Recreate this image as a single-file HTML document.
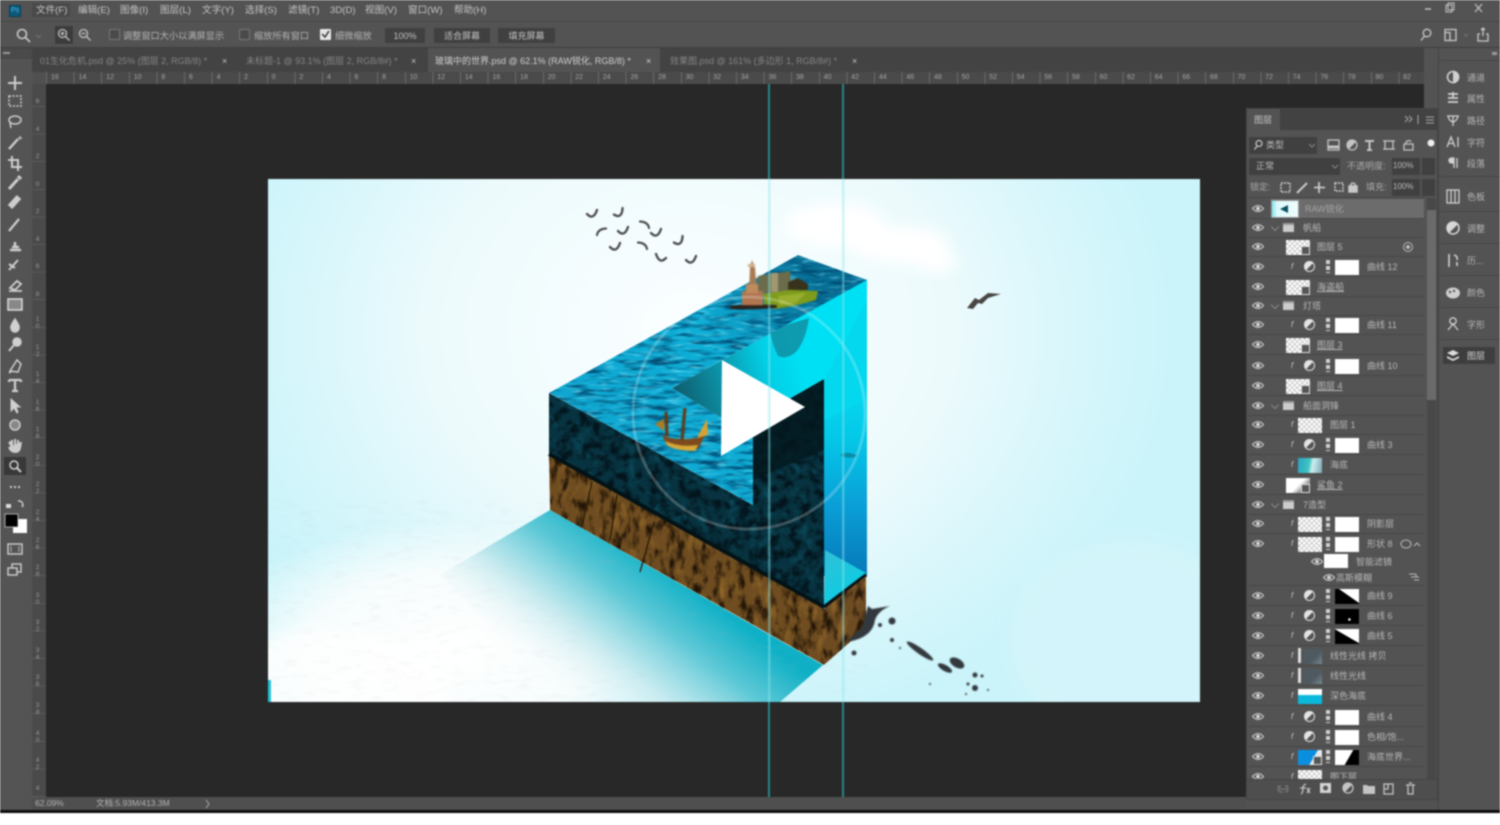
<!DOCTYPE html>
<html><head><meta charset="utf-8"><title>Photoshop</title>
<style>
html,body{margin:0;padding:0;background:#fff}
body{width:1500px;height:825px;overflow:hidden;position:relative;font-family:"Liberation Sans","Noto Sans CJK SC",sans-serif}
#app{position:absolute;left:0;top:0;width:1500px;height:813px;background:#535353;overflow:hidden;filter:blur(.8px)}
.a{position:absolute}
.t{position:absolute;white-space:nowrap;color:#bdbdbd;font-size:9.5px;line-height:14px}
.m{top:4px;color:#c4c4c4;font-size:9.6px}
.o{top:29px;color:#b4b4b4;font-size:9.2px}
.b{position:absolute;top:28px;height:15px;background:#404040;color:#c0c0c0;font-size:9px;line-height:16px;text-align:center}
.cb{position:absolute;top:29px;width:9px;height:9px;border:1px solid #777;background:#4a4a4a;border-radius:1px}
.tb{top:54px;color:#858585;font-size:9px}
.rul{position:absolute;left:46px;top:72px;width:1378px;height:12px;overflow:hidden;white-space:nowrap;background:#4a4a4a repeating-linear-gradient(90deg,#6a6a6a 0 1px,transparent 1px 27.6px);font-size:7px;line-height:12px;color:#a4a4a4}
.rul span{display:inline-block;width:27.6px;text-indent:5px}
.vr{position:absolute;left:33px;width:9px;font-size:6.5px;line-height:7px;color:#999;text-align:center}
.d{right:auto;position:absolute;color:#bcbcbc;font-size:9px;line-height:14px;white-space:nowrap}
.r{position:absolute;left:1248px;width:176px;height:20px;border-bottom:1px solid #474747;box-sizing:border-box}
.r>*{position:absolute}
.r .l{color:#b8b8b8;font-size:9px;line-height:19px;top:1px;white-space:nowrap}
.e{left:4px;top:5px;width:12px;height:9px}
.fx{left:43px;top:0;color:#c4c4c4;font-size:8px;line-height:19px;font-style:italic}
.c{left:56px;top:4px;width:11px;height:11px;border-radius:50%;background:linear-gradient(135deg,#e4e4e4 50%,#555 50%);box-shadow:0 0 0 1px #ddd inset}
.ln{left:78px;top:3px;width:4px;height:13px;background:repeating-linear-gradient(#d0d0d0 0 4px,#555 4px 6px)}
.k{left:87px;top:3px;width:24px;height:15px;background:#fff}
.chk{background:repeating-conic-gradient(#cfcfcf 0 25%,#fff 0 50%) 0 0/5px 5px;height:15px;top:3px}
.sm{left:38px;width:24px}
.sm::after{content:"";position:absolute;right:0;bottom:0;width:9px;height:9px;background:#555;border:1px solid #ddd;box-sizing:border-box}
.cl{left:50px;width:24px}
.fo{left:35px;top:5px;width:11px;height:9px;background:#ccc;border-top:2px solid #999;box-sizing:border-box}
.ar{left:24px;top:6px;width:5px;height:5px;border:solid #888;border-width:0 1px 1px 0;transform:rotate(45deg)}
.dk{position:absolute;left:1438px;width:62px;height:20px}
.dk .l{position:absolute;left:29px;top:4px;color:#b6b6b6;font-size:9px;line-height:14px}
.dk svg{position:absolute;left:7px;top:2px;width:16px;height:16px}
.sep{position:absolute;left:1438px;width:62px;height:1px;background:#454545}
</style></head>
<body>
<div id="app">
<!-- top bar -->
<div class="a" style="left:0;top:21px;width:1500px;height:1px;background:#484848"></div>
<div class="a" style="left:9px;top:5px;width:12px;height:12px;background:#0c5a7a;border:1px solid #06415a;box-sizing:border-box"></div>
<div class="t" style="left:11px;top:4px;font-size:7px;color:#52b8e6">Ps</div>
<div class="a" style="left:32px;top:3px;width:38px;height:14px;background:#4a4a4a"></div>
<span class="t m" style="left:36px">文件(F)</span><span class="t m" style="left:78px">编辑(E)</span><span class="t m" style="left:120px">图像(I)</span><span class="t m" style="left:160px">图层(L)</span><span class="t m" style="left:202px">文字(Y)</span><span class="t m" style="left:245px">选择(S)</span><span class="t m" style="left:288px">滤镜(T)</span><span class="t m" style="left:330px">3D(D)</span><span class="t m" style="left:365px">视图(V)</span><span class="t m" style="left:408px">窗口(W)</span><span class="t m" style="left:454px">帮助(H)</span>
<svg class="a" style="left:1420px;top:0" width="70" height="20" fill="none" stroke="#c4c4c4"><path d="M5 9h6" stroke-width="1.5"/><rect x="26" y="5" width="6" height="7"/><rect x="28" y="3" width="6" height="7"/><path d="M55 4l7 8M62 4l-7 8" stroke-width="1.2"/></svg>

<!-- options bar -->
<div class="a" style="left:0;top:47px;width:1500px;height:1px;background:#3e3e3e"></div>
<svg class="a" style="left:14px;top:25px" width="100" height="20" fill="none" stroke="#c8c8c8" stroke-width="1.6"><circle cx="8" cy="9" r="4.5"/><path d="M11.500 12.500l4.500 4.500"/><path d="M22 10l2.500 2.500L27 10" stroke="#777" stroke-width="1"/></svg>
<div class="a" style="left:55px;top:26px;width:18px;height:18px;background:#3c3c3c"></div>
<svg class="a" style="left:56px;top:27px" width="40" height="16" fill="none" stroke="#c0c0c0" stroke-width="1.3"><circle cx="6.500" cy="6.500" r="4"/><path d="M9.500 9.500l4 4M4.500 6.500h4M6.500 4.500v4"/><circle cx="27.500" cy="6.500" r="4"/><path d="M30.500 9.500l4 4M25.500 6.500h4"/></svg>
<div class="cb" style="left:109px"></div><span class="t o" style="left:123px">调整窗口大小以满屏显示</span>
<div class="cb" style="left:239px"></div><span class="t o" style="left:254px">缩放所有窗口</span>
<div class="cb" style="left:320px;background:#e4e4e4;border-color:#eee"></div>
<svg class="a" style="left:320px;top:29px" width="11" height="11" fill="none" stroke="#333" stroke-width="1.5"><path d="M2 5l3 3 4-6"/></svg>
<span class="t o" style="left:335px">细微缩放</span>
<div class="b" style="left:385px;width:40px">100%</div>
<div class="b" style="left:434px;width:56px">适合屏幕</div>
<div class="b" style="left:498px;width:57px">填充屏幕</div>
<svg class="a" style="left:1416px;top:25px" width="84" height="20" fill="none" stroke="#c8c8c8" stroke-width="1.3"><circle cx="11" cy="8" r="3.800"/><path d="M8.500 11L5 15.500"/><rect x="29" y="4.500" width="11" height="11"/><path d="M29 7.500h5v8" /><path d="M48 9l2 2 2-2" stroke="#777" stroke-width="1"/><path d="M64 9h-2v7h10V9h-2M67 11V3M65 5l2-2 2 2"/></svg>

<!-- tabs -->
<div class="a" style="left:32px;top:48px;width:1392px;height:24px;background:#434343"></div>
<div class="a" style="left:0;top:48px;width:32px;height:11px;background:#4a4a4a"></div>
<div class="a" style="left:3px;top:52px;width:7px;height:2px;background:#999"></div>
<div class="a" style="left:428px;top:48px;width:232px;height:24px;background:#535353"></div>
<span class="t tb" style="left:40px">01生化危机.psd @ 25% (图层 2, RGB/8) *</span>
<span class="t tb" style="left:222px;color:#c8c8c8">×</span>
<span class="t tb" style="left:246px">未标题-1 @ 93.1% (图层 2, RGB/8#) *</span>
<span class="t tb" style="left:411px;color:#c8c8c8">×</span>
<span class="t tb" style="left:435px;color:#d0d0d0">玻璃中的世界.psd @ 62.1% (RAW锐化, RGB/8) *</span>
<span class="t tb" style="left:646px;color:#d8d8d8">×</span>
<span class="t tb" style="left:670px">效果图.psd @ 161% (多边形 1, RGB/8#) *</span>
<span class="t tb" style="left:852px;color:#c8c8c8">×</span>

<!-- rulers -->
<div class="a" style="left:32px;top:72px;width:14px;height:12px;background:#505050"></div>
<div class="rul"><span>16</span><span>14</span><span>12</span><span>10</span><span>8</span><span>6</span><span>4</span><span>2</span><span>0</span><span>2</span><span>4</span><span>6</span><span>8</span><span>10</span><span>12</span><span>14</span><span>16</span><span>18</span><span>20</span><span>22</span><span>24</span><span>26</span><span>28</span><span>30</span><span>32</span><span>34</span><span>36</span><span>38</span><span>40</span><span>42</span><span>44</span><span>46</span><span>48</span><span>50</span><span>52</span><span>54</span><span>56</span><span>58</span><span>60</span><span>62</span><span>64</span><span>66</span><span>68</span><span>70</span><span>72</span><span>74</span><span>76</span><span>78</span><span>80</span><span>82</span></div>
<div class="a" style="left:32px;top:84px;width:14px;height:713px;background:#4a4a4a repeating-linear-gradient(0deg,#5a5a5a 0 1px,transparent 1px 27.6px)"></div>
<div class="vr" style="top:98px">6</div><div class="vr" style="top:126px">4</div><div class="vr" style="top:153px">2</div><div class="vr" style="top:181px">0</div><div class="vr" style="top:208px">2</div><div class="vr" style="top:236px">4</div><div class="vr" style="top:263px">6</div><div class="vr" style="top:291px">8</div><div class="vr" style="top:316px">1<br>0</div><div class="vr" style="top:344px">1<br>2</div><div class="vr" style="top:371px">1<br>4</div><div class="vr" style="top:399px">1<br>6</div><div class="vr" style="top:426px">1<br>8</div><div class="vr" style="top:454px">2<br>0</div><div class="vr" style="top:481px">2<br>2</div><div class="vr" style="top:509px">2<br>4</div><div class="vr" style="top:537px">2<br>6</div><div class="vr" style="top:564px">2<br>8</div><div class="vr" style="top:592px">3<br>0</div><div class="vr" style="top:619px">3<br>2</div><div class="vr" style="top:647px">3<br>4</div><div class="vr" style="top:674px">3<br>6</div><div class="vr" style="top:702px">3<br>8</div><div class="vr" style="top:730px">4<br>0</div><div class="vr" style="top:757px">4<br>2</div><div class="vr" style="top:785px">4</div>

<!-- canvas -->
<div class="a" style="left:46px;top:84px;width:1378px;height:713px;background:#282828"></div>

<!-- artwork -->
<svg class="a" style="left:0;top:0" width="1500" height="813" viewBox="0 0 1500 813">
<defs>
<clipPath id="ic"><rect x="268" y="179" width="932" height="523"/></clipPath>
<radialGradient id="bgw" gradientUnits="userSpaceOnUse" cx="690" cy="330" r="400" gradientTransform="matrix(1.2 0 0 1 -138 0)"><stop offset="0" stop-color="#fbfeff"/><stop offset=".55" stop-color="#ecfafc"/><stop offset="1" stop-color="#e4f8fb" stop-opacity="0"/></radialGradient>
<radialGradient id="bl"><stop offset="0" stop-color="#fff"/><stop offset=".6" stop-color="#fbfdfd" stop-opacity=".9"/><stop offset="1" stop-color="#fff" stop-opacity="0"/></radialGradient>
<linearGradient id="sh" gradientUnits="userSpaceOnUse" x1="690" y1="585" x2="590" y2="715"><stop offset="0" stop-color="#0fb0c6"/><stop offset=".3" stop-color="#5cc8d6"/><stop offset=".65" stop-color="#c6eaef" stop-opacity=".85"/><stop offset="1" stop-color="#f4fafb" stop-opacity="0"/></linearGradient>
<linearGradient id="sea" gradientUnits="userSpaceOnUse" x1="560" y1="420" x2="800" y2="260"><stop offset="0" stop-color="#0fa6d0"/><stop offset=".6" stop-color="#0eaed6"/><stop offset="1" stop-color="#076f96"/></linearGradient>
<linearGradient id="wall" gradientUnits="userSpaceOnUse" x1="672" y1="400" x2="800" y2="360"><stop offset="0" stop-color="#0e5666"/><stop offset=".4" stop-color="#0c93a8"/><stop offset=".75" stop-color="#02cfe6"/><stop offset="1" stop-color="#00e0f4"/></linearGradient>
<linearGradient id="side" x1="0" y1="0" x2="0" y2="1"><stop offset="0" stop-color="#05dcf2"/><stop offset=".3" stop-color="#04c8e8"/><stop offset=".65" stop-color="#0a9ed6"/><stop offset="1" stop-color="#0678b8"/></linearGradient>
<linearGradient id="fl" gradientUnits="userSpaceOnUse" x1="826" y1="555" x2="866" y2="600"><stop offset="0" stop-color="#30c0d8"/><stop offset="1" stop-color="#00d0e6"/></linearGradient>
<filter id="fSea" filterUnits="userSpaceOnUse" x="540" y="250" width="340" height="270" color-interpolation-filters="sRGB">
 <feTurbulence type="fractalNoise" baseFrequency=".04 .2" numOctaves="3" seed="7" result="n"/>
 <feColorMatrix in="n" values="0 0 0 0 .0 0 0 0 0 .3 0 0 0 0 .46 3 0 0 0 -1.35" result="d"/>
 <feTurbulence type="fractalNoise" baseFrequency=".06 .3" numOctaves="2" seed="21" result="n2"/>
 <feColorMatrix in="n2" values="0 0 0 0 .4 0 0 0 0 .85 0 0 0 0 .95 2.4 0 0 0 -1.3" result="w"/>
 <feMerge result="m"><feMergeNode in="SourceGraphic"/><feMergeNode in="d"/><feMergeNode in="w"/></feMerge>
 <feComposite in="m" in2="SourceGraphic" operator="in"/>
</filter>
<filter id="fRock" filterUnits="userSpaceOnUse" x="540" y="380" width="300" height="240" color-interpolation-filters="sRGB">
 <feTurbulence type="fractalNoise" baseFrequency=".1" numOctaves="4" seed="5" result="n"/>
 <feColorMatrix in="n" values="0 0 0 0 .01 0 0 0 0 .08 0 0 0 0 .11 3.4 0 0 0 -1.4" result="d"/>
 <feTurbulence type="fractalNoise" baseFrequency=".08" numOctaves="3" seed="33" result="n2"/>
 <feColorMatrix in="n2" values="0 0 0 0 .04 0 0 0 0 .3 0 0 0 0 .37 3 0 0 0 -1.65" result="w"/>
 <feMerge result="m"><feMergeNode in="SourceGraphic"/><feMergeNode in="d"/><feMergeNode in="w"/></feMerge>
 <feComposite in="m" in2="SourceGraphic" operator="in"/>
</filter>
<filter id="fSoil" filterUnits="userSpaceOnUse" x="540" y="450" width="340" height="230" color-interpolation-filters="sRGB">
 <feTurbulence type="fractalNoise" baseFrequency=".13 .06" numOctaves="4" seed="11" result="n"/>
 <feColorMatrix in="n" values="0 0 0 0 .12 0 0 0 0 .07 0 0 0 0 .02 3 0 0 0 -1.35" result="d"/>
 <feTurbulence type="fractalNoise" baseFrequency=".08 .04" numOctaves="3" seed="42" result="n2"/>
 <feColorMatrix in="n2" values="0 0 0 0 .64 0 0 0 0 .46 0 0 0 0 .18 2.2 0 0 0 -1.2" result="w"/>
 <feMerge result="m"><feMergeNode in="SourceGraphic"/><feMergeNode in="d"/><feMergeNode in="w"/></feMerge>
 <feComposite in="m" in2="SourceGraphic" operator="in"/>
</filter>
<filter id="fPaper" filterUnits="userSpaceOnUse" x="268" y="500" width="600" height="202">
 <feTurbulence type="fractalNoise" baseFrequency=".06 .2" numOctaves="3" seed="9"/>
 <feColorMatrix values="0 0 0 0 .45 0 0 0 0 .5 0 0 0 0 .52 2.2 0 0 0 -1.2"/>
</filter>
<filter id="b6"><feGaussianBlur stdDeviation="7"/></filter>
<filter id="b1"><feGaussianBlur stdDeviation=".5"/></filter>
<path id="bA" d="M-5 3Q-4-3 4-3.500" fill="none" stroke="#505052" stroke-width="2.2" stroke-linecap="round"/>
<path id="bB" d="M-6-1Q-3 2-1 1.500Q2 1 4-5" fill="none" stroke="#505052" stroke-width="2.4" stroke-linecap="round"/>
</defs>
<g clip-path="url(#ic)">
 <rect x="268" y="179" width="932" height="523" fill="#cbf4fa"/>
 <rect x="268" y="179" width="932" height="523" fill="url(#bgw)"/>
 <ellipse cx="1130" cy="640" rx="120" ry="100" fill="#d6f5fa" opacity=".7" filter="url(#b6)"/>
 <ellipse cx="450" cy="650" rx="240" ry="130" fill="url(#bl)"/>
 <ellipse cx="330" cy="690" rx="120" ry="60" fill="#fff" opacity=".8" filter="url(#b6)"/>
 <g filter="url(#b6)" fill="#fff"><ellipse cx="835" cy="225" rx="50" ry="22"/><ellipse cx="900" cy="245" rx="50" ry="18"/><ellipse cx="935" cy="262" rx="22" ry="10"/></g>
 <polygon points="550,510 823,665 780,702 560,702 440,575" fill="url(#sh)"/>
 <rect x="268" y="500" width="600" height="202" filter="url(#fPaper)" opacity=".14"/>
 <rect x="268" y="680" width="3" height="22" fill="#20c4d8"/>

 <!-- wall / cyan -->
 <polygon points="672,388 737,352 867,279 867,430 824,379 753,420 753,437" fill="url(#wall)"/>
 <!-- iceberg -->
 <path d="M770 330L809 318Q806 340 796 352Q786 360 778 356Q772 344 770 330Z" fill="#128a9e" opacity=".8"/>
 <!-- right side -->
 <rect x="824" y="378" width="43" height="198" fill="url(#side)"/>
 <polygon points="824,379 867,300 867,400 824,420" fill="#04d8ee"/>
 <polygon points="825,550 866,573 824,608" fill="url(#fl)"/>
 <!-- rock -->
 <polygon points="549,393 753,505 753,420 824,379 824,610 549,458" fill="#07323f" filter="url(#fRock)"/>
 <path d="M753 420L824 379V450L753 480Z" fill="#04181e" opacity=".8"/>
 <path d="M549 454L824 607" stroke="#041216" stroke-width="4" fill="none"/>
 <path d="M824 607L866 575" stroke="#041216" stroke-width="3.500" fill="none"/>
 <!-- soil -->
 <polygon points="549,456 824,609 824,665 550,510" fill="#6f4d20" filter="url(#fSoil)"/>
 <polygon points="824,609 866,576 866,628 824,665" fill="#6e4c22" filter="url(#fSoil)"/>
 <path d="M592 482L582 526M617 495L610 540M654 522L640 572" stroke="#2a1a08" stroke-width="1.3" fill="none"/>
 <!-- ocean -->
 <polygon points="549,393 753,505 753,437 672,388 737,352 867,280 798,255" fill="url(#sea)" filter="url(#fSea)"/>
 <!-- island -->
 <g filter="url(#b1)">
  <path d="M758 276L790 271L792 293L757 293Z" fill="#6a6c4c"/>
  <rect x="771" y="273" width="7" height="19" fill="#a09870"/>
  <path d="M788 282L798 278L808 284L808 290L788 292Z" fill="#37331f"/>
  <path d="M763 294L790 290L818 291L816 300L794 306L775 309L765 305Z" fill="#7f9c1e"/>
  <path d="M778 296L806 293L796 303L780 305Z" fill="#98ae2e"/>
  <path d="M730 306Q752 303 777 305L777 308Q752 310 730 309Z" fill="#2c221a"/>
  <path d="M750 268L752 260L755 268L757 292H749Z" fill="#a87a52"/>
  <rect x="748" y="264" width="7" height="3" fill="#d0b090"/>
  <rect x="742" y="291" width="21" height="14" fill="#b07650"/>
  <rect x="746" y="284" width="12" height="9" fill="#c08a5c"/>
 </g>
 <!-- ship -->
 <g filter="url(#b1)">
  <path d="M662 435Q680 443 705 436L698 449Q676 450 666 444Z" fill="#7e4a1a"/>
  <path d="M665 441Q680 448 698 445L695 451Q678 451 668 446Z" fill="#d8a838"/>
  <path d="M666 412L667 436M685 408L682 440" stroke="#5e3a14" stroke-width="3.200"/>
  <path d="M697 438L707 419L708 435Z" fill="#d8a230"/>
  <path d="M655 424L664 419L664 431Z" fill="#b07a20"/>
 </g>
 <!-- fish -->
 <path d="M840 455Q848 450 858 456Q848 460 840 455Z" fill="#0a7890" opacity=".7"/>
 <!-- ring -->
 <circle cx="749" cy="413" r="116" fill="none" stroke="#fff" stroke-opacity=".22" stroke-width="3"/>
 <!-- play -->
 <polygon points="722,360 805,407 721,456" fill="#fff"/>
 <!-- birds -->
 <use href="#bB" x="593" y="215"/><use href="#bB" transform="translate(620,214) rotate(-15)"/><use href="#bA" x="602" y="232"/><use href="#bB" x="624" y="232"/><use href="#bA" transform="translate(644,225) scale(-1,1)"/><use href="#bB" x="657" y="234"/><use href="#bB" transform="translate(680,242) rotate(-15)"/><use href="#bB" x="616" y="248"/><use href="#bA" transform="translate(642,246) scale(-1,1)"/><use href="#bB" transform="translate(660,259) scale(-1,1)"/><use href="#bB" x="692" y="261"/>
 <path d="M967 308L975 298L979 300L988 293L1001 294L988 298L982 304L978 303L973 309Z" fill="#4a4545"/>
 <!-- ink -->
 <g fill="#33383c" filter="url(#b1)">
  <path d="M868 606L872 609L890 606Q878 611 875 620Q873 636 852 641L848 640L862 628Z"/>
  <circle cx="892" cy="621" r="3.500"/><circle cx="880" cy="625" r="2"/><circle cx="854" cy="653" r="2.500"/><circle cx="892" cy="640" r="2"/>
  <ellipse cx="920" cy="651" rx="16" ry="3" transform="rotate(35 920 651)"/>
  <ellipse cx="957" cy="663" rx="8" ry="4.500" transform="rotate(30 957 663)"/>
  <ellipse cx="945" cy="668" rx="8" ry="3" transform="rotate(30 945 668)"/>
  <circle cx="975" cy="675" r="2.500"/><circle cx="982" cy="676" r="1.500"/><circle cx="975" cy="688" r="3"/><circle cx="968" cy="684" r="1.500"/><circle cx="988" cy="690" r="1"/><circle cx="966" cy="694" r="1"/><circle cx="930" cy="684" r="1"/><circle cx="900" cy="648" r="1"/>
 </g>
</g>
<!-- guides -->
<g>
 <rect x="768" y="84" width="2" height="95" fill="#2b8589"/><rect x="842" y="84" width="2" height="95" fill="#2b8589"/>
 <rect x="768" y="702" width="2" height="95" fill="#2b8589"/><rect x="842" y="702" width="2" height="95" fill="#2b8589"/>
 <rect x="768" y="179" width="2.500" height="523" fill="#8ce8ec" opacity=".42"/><rect x="842" y="179" width="2.500" height="523" fill="#8ce8ec" opacity=".42"/>
</g>
</svg>

<!-- toolbar -->
<div class="a" style="left:0;top:72px;width:32px;height:741px;background:#545454"></div>
<div class="a" style="left:4px;top:457px;width:22px;height:18px;background:#383838"></div>
<svg class="a" style="left:4px;top:70px" width="24" height="515" fill="none" stroke="#cdcdcd" stroke-width="1.5">
 <g transform="translate(0,3)"><path d="M11 3v14M4 10h14" stroke-width="2"/></g>
 <rect x="5" y="26" width="12" height="10" stroke-dasharray="2 1.500"/>
 <ellipse cx="11" cy="50" rx="6" ry="4"/><path d="M6 53l1 5"/>
 <path d="M5 79L14 69" stroke-width="2.400"/><path d="M16 66v4M14 68h4" stroke-width="1"/>
 <path d="M8 86v11h10M4 90h10v11" stroke-width="2"/>
 <path d="M5 119L14 109" stroke-width="3"/><path d="M14 106l3 3" stroke-width="3"/>
 <path d="M6 137L15 127" stroke-width="6"/>
 <path d="M5 161L15 149" stroke-width="2.200"/>
 <path d="M6 180h11M8 177h7M11 177v-5" stroke-width="2.600"/>
 <path d="M5 200L14 190M5 194l6 4" stroke-width="2"/>
 <path d="M6 218L13 211l4 3-6 6zM5 221h13" stroke-width="1.800"/>
 <rect x="4" y="229" width="14" height="11" fill="#888" stroke="#ddd"/>
 <path d="M11 249Q6 256 7 258a4 4 0 0 0 8 0Q16 256 11 249Z" fill="#d0d0d0"/>
 <circle cx="13" cy="272" r="4" fill="#d0d0d0"/><path d="M10 275L5 281" stroke-width="2"/>
 <path d="M6 301L13 290l4 4-3 8zM5 303l3-2"/>
 <path d="M5 310h12M11 310v11M8 321h6M5 310v2M17 310v2" stroke-width="2.300"/>
 <path d="M7 329v12l3-3 3 5 1-1-2-5h4Z" fill="#d0d0d0" stroke-width="1"/>
 <circle cx="11" cy="355" r="5" fill="#888"/>
 <path d="M5 372l3 5V370M8 370v7M11 369v8M14 370v7M17 372l-1 6q-1 4-5 4t-6-5" stroke-width="2" fill="#ccc"/>
 <circle cx="10" cy="395" r="4"/><path d="M13 398l4 4" stroke-width="2"/>
 <path d="M6 417h2M10 417h2M14 417h2" stroke-width="2"/>
</svg>
<svg class="a" style="left:4px;top:498px" width="24" height="90" fill="none" stroke="#cfcfcf" stroke-width="1.400">
 <path d="M2 6h5v4H2z" fill="#ddd" stroke="none"/><path d="M16 3q3 1 3 5M14 3h3M18 7l1 2"/>
 <rect x="9" y="21" width="14" height="14" fill="#fff" stroke="none"/>
 <rect x="1" y="16" width="13" height="13" fill="#000" stroke="#ccc" stroke-width=".8"/>
 <rect x="4" y="46" width="14" height="10" /><path d="M7 48v6M15 48v6" stroke-width=".8"/>
 <rect x="8" y="66" width="9" height="8"/><rect x="4" y="70" width="9" height="7" fill="#545454"/>
</svg>

<!-- right side column -->
<div class="a" style="left:1424px;top:84px;width:14px;height:729px;background:#535353"></div>

<!-- dock -->
<div class="a" style="left:1438px;top:48px;width:62px;height:765px;background:#535353;border-left:1px solid #434343;box-sizing:border-box"></div>
<div class="a" style="left:1492px;top:52px;width:5px;height:3px;background:#999"></div>
<div class="a" style="left:1438px;top:60px;width:62px;height:1px;background:#454545"></div>
<div class="dk" style="top:67px"><svg fill="none" stroke="#d0d0d0" stroke-width="1.600"><circle cx="8" cy="8" r="5.500"/><path d="M8 2.500a5.500 5.500 0 0 1 0 11" fill="#d0d0d0"/></svg><span class="l">通道</span></div>
<div class="dk" style="top:88px"><svg fill="none" stroke="#d0d0d0" stroke-width="1.800"><path d="M3 4h10M3 8h10M3 12h10M8 2v5"/></svg><span class="l">属性</span></div>
<div class="dk" style="top:110px"><svg fill="none" stroke="#d0d0d0" stroke-width="1.300"><path d="M2 4h12M8 4v10M3 4q1 5 5 6M13 4q-1 5-5 6"/></svg><span class="l">路径</span></div>
<div class="dk" style="top:132px"><svg fill="none" stroke="#d0d0d0" stroke-width="1.300"><path d="M2 13L6 3l4 10M3.500 9.500h5M13 3v10"/></svg><span class="l">字符</span></div>
<div class="dk" style="top:153px"><svg fill="#d0d0d0" stroke="#d0d0d0" stroke-width="1.300"><path d="M9 3H6.500a2.500 2.500 0 0 0 0 5H9zM9 3v10M12 3v10"/></svg><span class="l">段落</span></div>
<div class="sep" style="top:176px"></div>
<div class="dk" style="top:186px"><svg fill="none" stroke="#d0d0d0" stroke-width="1.300"><rect x="2" y="2" width="12" height="13"/><path d="M6 2v13M10 2v13"/></svg><span class="l">色板</span></div>
<div class="sep" style="top:211px"></div>
<div class="dk" style="top:218px"><svg fill="none" stroke="#d8d8d8" stroke-width="1.500"><circle cx="8" cy="8" r="6"/><path d="M3.800 12.200A6 6 0 0 1 12.200 3.800Z" fill="#d8d8d8"/></svg><span class="l">调整</span></div>
<div class="sep" style="top:243px"></div>
<div class="dk" style="top:250px"><svg fill="none" stroke="#d0d0d0" stroke-width="1.600"><path d="M4 2v13M9 3q4 1 3 5M12 10v4"/></svg><span class="l">历...</span></div>
<div class="sep" style="top:275px"></div>
<div class="dk" style="top:282px"><svg fill="#cfcfcf"><ellipse cx="8" cy="9" rx="7" ry="5.500"/><circle cx="5" cy="8" r="1.200" fill="#555"/><circle cx="9" cy="7" r="1.200" fill="#555"/></svg><span class="l">颜色</span></div>
<div class="sep" style="top:307px"></div>
<div class="dk" style="top:314px"><svg fill="none" stroke="#d0d0d0" stroke-width="1.300"><circle cx="8" cy="5" r="3.200"/><path d="M3 14L8 8l5 6"/></svg><span class="l">字形</span></div>
<div class="sep" style="top:339px"></div>
<div class="a" style="left:1443px;top:347px;width:52px;height:17px;background:#3e3e3e"></div>
<div class="dk" style="top:345px"><svg fill="#dcdcdc"><path d="M8 3l6 3-6 3-6-3z"/><path d="M2 9l6 3 6-3v2l-6 3-6-3z"/></svg><span class="l" style="color:#d0d0d0">图层</span></div>

<!-- layers panel -->
<div class="a" style="left:1246px;top:108px;width:192px;height:692px;background:#535353;border:1px solid #454545;box-sizing:border-box"></div>
<div class="a" style="left:1247px;top:109px;width:190px;height:21px;background:#424242"></div>
<div class="a" style="left:1247px;top:109px;width:33px;height:21px;background:#535353"></div>
<span class="d" style="left:1254px;top:113px;color:#c4c4c4">图层</span>
<svg class="a" style="left:1402px;top:114px" width="34" height="12" fill="none" stroke="#aaa"><path d="M3 2l3 3-3 3M7 2l3 3-3 3M16 1v9M24 3h8M24 6h8M24 9h8"/></svg>
<div class="a" style="left:1249px;top:137px;width:68px;height:17px;background:#404040"></div>
<svg class="a" style="left:1253px;top:139px" width="10" height="12" fill="none" stroke="#ccc" stroke-width="1.200"><circle cx="6" cy="4.500" r="3"/><path d="M4 7L1.500 10.500"/></svg>
<span class="d" style="left:1266px;top:138px">类型</span>
<svg class="a" style="left:1308px;top:143px" width="8" height="6" fill="none" stroke="#888"><path d="M1 1l3 3 3-3"/></svg>
<svg class="a" style="left:1326px;top:137px" width="112" height="17" fill="none" stroke="#c4c4c4" stroke-width="1.300"><rect x="2" y="3" width="11" height="10"/><path d="M2 10h11" stroke-width="3"/><circle cx="26" cy="8" r="5"/><path d="M22.500 11.500A5 5 0 0 1 29.500 4.500Z" fill="#c4c4c4"/><path d="M39 4h9M43.500 4v9M41 13h5" stroke-width="2"/><rect x="59" y="4" width="8" height="8"/><path d="M57 4h4M65 4h4M57 12h4M65 12h4"/><path d="M78 7h9v6h-9zM80 7V5q3-3 5 0" /><circle cx="105" cy="6" r="3.500" fill="#eee" stroke="none"/></svg>
<div class="a" style="left:1249px;top:158px;width:91px;height:17px;background:#404040"></div>
<span class="d" style="left:1256px;top:159px">正常</span>
<svg class="a" style="left:1331px;top:164px" width="8" height="6" fill="none" stroke="#888"><path d="M1 1l3 3 3-3"/></svg>
<span class="d" style="left:1347px;top:159px;color:#aaa">不透明度:</span>
<div class="a" style="left:1392px;top:158px;width:28px;height:17px;background:#404040"></div>
<span class="d" style="left:1393px;top:159px;font-size:8px">100%</span>
<div class="a" style="left:1422px;top:158px;width:13px;height:17px;background:#404040"></div>
<span class="d" style="left:1250px;top:180px;color:#aaa">锁定:</span>
<svg class="a" style="left:1276px;top:179px" width="90" height="17" fill="none" stroke="#c8c8c8" stroke-width="1.500"><rect x="5" y="4" width="9" height="9" stroke-dasharray="2 1"/><path d="M21 14L31 4" stroke-width="2"/><path d="M43 3v11M38 8.500h11" stroke-width="1.800"/><rect x="59" y="4" width="8" height="8" stroke-dasharray="2 1"/><rect x="73" y="7" width="8" height="6" fill="#c8c8c8"/><path d="M75 7V5q2-2 4 0v2"/></svg>
<span class="d" style="left:1366px;top:180px;color:#aaa">填充:</span>
<div class="a" style="left:1392px;top:179px;width:28px;height:17px;background:#404040"></div>
<span class="d" style="left:1393px;top:180px;font-size:8px">100%</span>
<div class="a" style="left:1422px;top:179px;width:13px;height:17px;background:#404040"></div>
<div class="a" style="left:1248px;top:197px;width:177px;height:1px;background:#474747"></div>

<div class="a" style="left:1247px;top:198px;width:190px;height:582px;overflow:hidden">
<svg width="0" height="0" style="position:absolute"><defs><symbol id="ey" viewBox="0 0 12 9"><path d="M.5 4.500Q6-1.500 11.500 4.500Q6 10.500.5 4.500Z" fill="none" stroke="#cfcfcf" stroke-width="1.100"/><circle cx="6" cy="4.500" r="2" fill="#cfcfcf"/></symbol></defs></svg>
<div style="position:absolute;left:-1247px;top:-198px;width:1500px;height:800px">
<div class="r" style="top:199px"><svg class="e"><use href="#ey"/></svg><div style="left:23px;top:0;width:153px;height:19px;background:#6c6c6c"></div><div style="left:24px;top:2px;width:26px;height:16px;background:linear-gradient(90deg,#7ee8f0,#dff9fb 20%,#eefcfd);outline:1px solid #9a9a9a"></div><div style="left:32px;top:6px;width:0;height:0;border:solid transparent;border-width:4px 8px 4px 0;border-right-color:#0a5060"></div><span class="l" style="left:57px;color:#a4a4a4">RAW锐化</span></div>
<div class="r" style="top:218px"><svg class="e"><use href="#ey"/></svg><i class="ar"></i><i class="fo"></i><span class="l" style="left:55px">帆船</span></div>
<div class="r" style="top:237px"><svg class="e"><use href="#ey"/></svg><i class="chk sm"></i><span class="l" style="left:69px">图层 5</span><svg style="left:154px;top:4px" width="12" height="12" fill="none" stroke="#bbb"><circle cx="6" cy="6" r="4.500"/><circle cx="6" cy="6" r="1.500" fill="#bbb"/></svg></div>
<div class="r" style="top:257px"><svg class="e"><use href="#ey"/></svg><i class="fx">f</i><i class="c"></i><i class="ln"></i><i class="k"></i><span class="l" style="left:119px">曲线 12</span></div>
<div class="r" style="top:277px"><svg class="e"><use href="#ey"/></svg><i class="chk sm"></i><span class="l" style="left:69px;text-decoration:underline">海盗船</span></div>
<div class="r" style="top:296px"><svg class="e"><use href="#ey"/></svg><i class="ar"></i><i class="fo"></i><span class="l" style="left:55px">灯塔</span></div>
<div class="r" style="top:315px"><svg class="e"><use href="#ey"/></svg><i class="fx">f</i><i class="c"></i><i class="ln"></i><i class="k"></i><span class="l" style="left:119px">曲线 11</span></div>
<div class="r" style="top:335px"><svg class="e"><use href="#ey"/></svg><i class="chk sm"></i><span class="l" style="left:69px;text-decoration:underline">图层 3</span></div>
<div class="r" style="top:356px"><svg class="e"><use href="#ey"/></svg><i class="fx">f</i><i class="c"></i><i class="ln"></i><i class="k"></i><span class="l" style="left:119px">曲线 10</span></div>
<div class="r" style="top:376px"><svg class="e"><use href="#ey"/></svg><i class="chk sm"></i><span class="l" style="left:69px;text-decoration:underline">图层 4</span></div>
<div class="r" style="top:396px"><svg class="e"><use href="#ey"/></svg><i class="ar"></i><i class="fo"></i><span class="l" style="left:55px">船面洞锋</span></div>
<div class="r" style="top:415px"><svg class="e"><use href="#ey"/></svg><i class="fx">f</i><i class="chk cl"></i><span class="l" style="left:82px">图层 1</span></div>
<div class="r" style="top:435px"><svg class="e"><use href="#ey"/></svg><i class="fx">f</i><i class="c"></i><i class="ln"></i><i class="k"></i><span class="l" style="left:119px">曲线 3</span></div>
<div class="r" style="top:455px"><svg class="e"><use href="#ey"/></svg><i class="fx">f</i><i class="cl" style="top:3px;height:15px;background:linear-gradient(100deg,#2aa4c4,#3fc4c0 45%,#cfeef0 60%,#7aa8b4)"></i><span class="l" style="left:82px">海底</span></div>
<div class="r" style="top:475px"><svg class="e"><use href="#ey"/></svg><i class="chk sm" style="background:linear-gradient(135deg,#fff 50%,#999 70%,#eee)"></i><span class="l" style="left:69px;text-decoration:underline">鲨鱼 2</span></div>
<div class="r" style="top:495px"><svg class="e"><use href="#ey"/></svg><i class="ar"></i><i class="fo"></i><span class="l" style="left:55px">7造型</span></div>
<div class="r" style="top:514px"><svg class="e"><use href="#ey"/></svg><i class="fx">f</i><i class="chk cl"></i><i class="ln"></i><i class="k"></i><span class="l" style="left:119px">阴影层</span></div>
<div class="r" style="top:534px;height:18px;border:0"><svg class="e"><use href="#ey"/></svg><i class="fx">f</i><i class="chk cl"></i><i class="ln"></i><i class="k"></i><span class="l" style="left:119px">形状 8</span><svg style="left:151px;top:3px" width="24" height="14" fill="none" stroke="#bbb"><ellipse cx="7" cy="7" rx="5" ry="4"/><path d="M15 9l3-3 3 3"/></svg></div>
<div class="r" style="top:552px;height:17px;border:0"><svg class="e" style="left:63px;top:5px"><use href="#ey"/></svg><i style="left:76px;top:2px;width:24px;height:14px;background:#fff"></i><span class="l" style="left:108px;line-height:18px">智能滤镜</span></div>
<div class="r" style="top:569px;height:17px"><svg class="e" style="left:75px;top:4px"><use href="#ey"/></svg><span class="l" style="left:88px;line-height:17px">高斯模糊</span><svg style="left:160px;top:3px" width="12" height="11" fill="none" stroke="#bbb"><path d="M1 2h7M8 2v3M3 5h8M6 8h5"/></svg></div>
<div class="r" style="top:586px"><svg class="e"><use href="#ey"/></svg><i class="fx">f</i><i class="c"></i><i class="ln"></i><i class="k" style="background:linear-gradient(35deg,#000 55%,#fff 57%)"></i><span class="l" style="left:119px">曲线 9</span></div>
<div class="r" style="top:606px"><svg class="e"><use href="#ey"/></svg><i class="fx">f</i><i class="c"></i><i class="ln"></i><i class="k" style="background:radial-gradient(circle at 60% 70%,#fff 0 1px,#000 1.5px)"></i><span class="l" style="left:119px">曲线 6</span></div>
<div class="r" style="top:626px"><svg class="e"><use href="#ey"/></svg><i class="fx">f</i><i class="c"></i><i class="ln"></i><i class="k" style="background:linear-gradient(30deg,#000 50%,#fff 52%)"></i><span class="l" style="left:119px">曲线 5</span></div>
<div class="r" style="top:646px"><svg class="e"><use href="#ey"/></svg><i class="fx">f</i><i style="left:50px;top:2px;width:3px;height:15px;background:#ddd"></i><i style="left:55px;top:3px;width:19px;height:15px;background:linear-gradient(135deg,#4e5a60 60%,#778890)"></i><span class="l" style="left:82px">线性光线 拷贝</span></div>
<div class="r" style="top:666px"><svg class="e"><use href="#ey"/></svg><i class="fx">f</i><i style="left:50px;top:2px;width:3px;height:15px;background:#ddd"></i><i style="left:55px;top:3px;width:19px;height:15px;background:linear-gradient(135deg,#4e5a60 60%,#778890)"></i><span class="l" style="left:82px">线性光线</span></div>
<div class="r" style="top:686px"><svg class="e"><use href="#ey"/></svg><i class="fx">f</i><i class="cl" style="top:3px;height:15px;background:linear-gradient(#fff 35%,#0ab8dc 45%,#0ab8dc)"></i><span class="l" style="left:82px">深色海底</span></div>
<div class="r" style="top:707px"><svg class="e"><use href="#ey"/></svg><i class="fx">f</i><i class="c"></i><i class="ln"></i><i class="k"></i><span class="l" style="left:119px">曲线 4</span></div>
<div class="r" style="top:727px"><svg class="e"><use href="#ey"/></svg><i class="fx">f</i><i class="c"></i><i class="ln"></i><i class="k"></i><span class="l" style="left:119px">色相/饱...</span></div>
<div class="r" style="top:747px"><svg class="e"><use href="#ey"/></svg><i class="fx">f</i><i class="sm" style="left:50px;top:3px;height:15px;width:24px;background:linear-gradient(120deg,#0a8fe0 60%,#e8e8e8 62%)"></i><i class="ln"></i><i class="k" style="background:linear-gradient(120deg,#fff 55%,#000 57%)"></i><span class="l" style="left:119px">海底世界...</span></div>
<div class="r" style="top:767px;border:0"><svg class="e"><use href="#ey"/></svg><i class="fx">f</i><i class="chk cl"></i><span class="l" style="left:82px">图下层</span></div>
</div></div>
<div class="a" style="left:1427px;top:198px;width:9px;height:582px;background:#484848"></div>
<div class="a" style="left:1427px;top:210px;width:9px;height:190px;background:#6a6a6a"></div>
<div class="a" style="left:1247px;top:779px;width:190px;height:20px;background:#4e4e4e;border-top:1px solid #444;box-sizing:border-box"></div>
<svg class="a" style="left:1276px;top:780px" width="150" height="18" fill="none" stroke="#c4c4c4" stroke-width="1.300"><path d="M3 9h8M2 6h3a3 3 0 0 0 0 6h2M12 6h-3a3 3 0 0 1 0 6" stroke="#777"/><path d="M25 14q2-1 2-6q0-3 3-4M24 8h6M31 8l3 5M34 8l-3 5"/><rect x="44" y="3" width="11" height="10" fill="#d4d4d4" stroke="none"/><circle cx="49.500" cy="8" r="2.500" fill="#555" stroke="none"/><circle cx="72" cy="8" r="5"/><path d="M68.500 11.500A5 5 0 0 1 75.500 4.500Z" fill="#c4c4c4"/><path d="M87 5h4l1 1h7v8H87z" fill="#c4c4c4" stroke="none"/><rect x="108" y="4" width="9" height="10"/><path d="M108 9h4V4"/><path d="M130 5h9M132 5v9h5V5M133 3h3"/></svg>

<!-- status bar -->
<div class="a" style="left:32px;top:797px;width:1214px;height:13px;background:#4f4f4f"></div>
<span class="t" style="left:35px;top:796px;font-size:8.500px;color:#b4b4b4">62.09%</span>
<span class="t" style="left:96px;top:796px;font-size:8.500px;color:#b4b4b4">文档:5.93M/413.3M</span>
<svg class="a" style="left:204px;top:799px" width="8" height="10" fill="none" stroke="#aaa"><path d="M2 1l3 4-3 4"/></svg>
<div class="a" style="left:1247px;top:800px;width:191px;height:10px;background:#515151"></div>
<div class="a" style="left:0;top:810px;width:1500px;height:3px;background:#0c0c0c"></div>
</div>
</body></html>
